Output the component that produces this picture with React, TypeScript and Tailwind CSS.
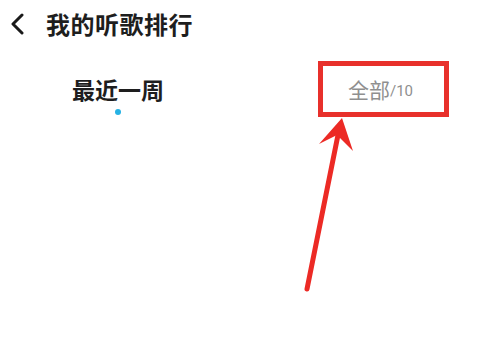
import React from "react";

export default function App() {
  return (
    <div
      className="relative w-[479px] h-[363px] bg-white overflow-hidden"
      style={{ fontFamily: '"Noto Sans CJK SC", "Noto Sans", sans-serif' }}
    >
      {/* Header */}
      <div className="flex items-center h-[48px] pl-[10px]">
        <svg width="16" height="22" viewBox="0 0 16 22" className="shrink-0">
          <path d="M12 2 L3 11 L12 20" fill="none" stroke="#1a1a1a" strokeWidth="3" strokeLinecap="round" strokeLinejoin="round" />
        </svg>
        <span className="ml-[20px] text-[24px] leading-none font-bold text-[#1e1e1e] tracking-[0.5px]">
          我的听歌排行
        </span>
      </div>

      {/* Tabs */}
      <div className="flex items-start mt-[13px]">
        <div className="w-[236px] flex flex-col items-center pt-[15px]">
          <span className="text-[23px] leading-[26px] font-bold text-[#1e1e1e]">最近一周</span>
          <span className="mt-[7px] w-[6px] h-[6px] rounded-full bg-[#26b2e4]" />
        </div>
        <div className="ml-[82px] w-[131px] h-[56px] border-[5px] border-[#e8302b] flex items-center pl-[25px]">
          <span className="text-[21px] leading-none text-[#8f8f8f]">全部</span>
          <span className="text-[15px] leading-none text-[#8f8f8f] mt-[5px]" style={{ fontFamily: 'Roboto, "Noto Sans", sans-serif' }}>/10</span>
        </div>
      </div>

      {/* Arrow annotation */}
      <svg className="absolute left-0 top-0" width="479" height="363" viewBox="0 0 479 363">
        <line x1="307" y1="289" x2="339" y2="130" stroke="#ec2a25" strokeWidth="5" strokeLinecap="round" />
        <polygon points="342,118 319,144 337,135 353,151" fill="#ec2a25" />
      </svg>
    </div>
  );
}
